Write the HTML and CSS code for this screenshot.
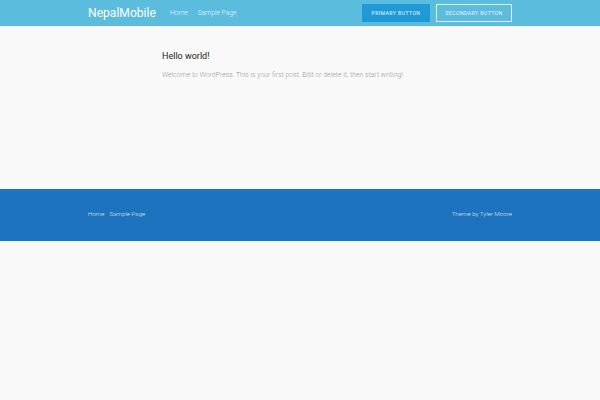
FILE: index.html
```html
<!DOCTYPE html>
<html>
<head>
<meta charset="utf-8">
<link rel="stylesheet" href="styles.css">
</head>
<body>
<header class="site-header">
  <div class="container header-inner">
    <div class="brand">
      <span class="logo">NepalMobile</span>
      <nav class="nav">
        <a>Home</a>
        <a>Sample Page</a>
      </nav>
    </div>
    <div class="actions">
      <a class="btn btn-primary">Primary Button</a>
      <a class="btn btn-secondary">Secondary Button</a>
    </div>
  </div>
</header>
<main class="content">
  <article class="post">
    <h2 class="post-title">Hello world!</h2>
    <p class="post-body">Welcome to WordPress. This is your first post. Edit or delete it, then start writing!</p>
  </article>
</main>
<footer class="site-footer">
  <div class="container footer-inner">
    <nav class="footer-nav">
      <a>Home</a>
      <a>Sample Page</a>
    </nav>
    <span class="credit">Theme by Tyler Moore</span>
  </div>
</footer>
</body>
</html>
```
FILE: styles.css
```css
* { box-sizing: border-box; }
html, body { margin: 0; padding: 0; }
body {
  background: #f9f9f9;
  font-family: Roboto, "Liberation Sans", sans-serif;
  width: 600px;
  height: 400px;
}
.container {
  width: 424px;
  margin: 0 auto;
}
.site-header {
  background: #5bbcdd;
  height: 26px;
}
.header-inner {
  height: 26px;
  display: flex;
  align-items: center;
  justify-content: space-between;
}
.brand {
  display: flex;
  align-items: center;
}
.logo {
  color: #fff;
  font-size: 12.1px;
  margin-right: 14px;
  line-height: 1;
}
.nav {
  display: flex;
  gap: 10px;
}
.nav a {
  color: #e8f6fb;
  font-size: 6.7px;
  font-weight: 300;
}
.actions {
  display: flex;
  gap: 6px;
}
.btn {
  display: flex;
  align-items: center;
  justify-content: center;
  height: 18px;
  font-size: 5.2px;
  text-transform: uppercase;
  letter-spacing: 0.4px;
  color: #eaf7fb;
}
.btn-primary {
  background: #1f9ad6;
  width: 68px;
}
.btn-secondary {
  border: 1px solid #d9f0f8;
  width: 76px;
}
.content {
  height: 163px;
  padding: 24px 0 0 162px;
}
.post-title {
  margin: 0;
  font-size: 9px;
  font-weight: 400;
  color: #222;
  line-height: 12px;
}
.post-body {
  margin: 8px 0 0;
  font-size: 6.9px;
  font-weight: 300;
  color: #999;
  line-height: 10px;
}
.site-footer {
  background: #1e73be;
  height: 52px;
}
.footer-inner {
  height: 52px;
  display: flex;
  align-items: center;
  justify-content: space-between;
  padding-bottom: 2px;
}
.footer-nav {
  display: flex;
  gap: 5px;
}
.footer-nav a, .credit {
  color: #d5e8f7;
  font-size: 6.2px;
  font-weight: 300;
}
```
